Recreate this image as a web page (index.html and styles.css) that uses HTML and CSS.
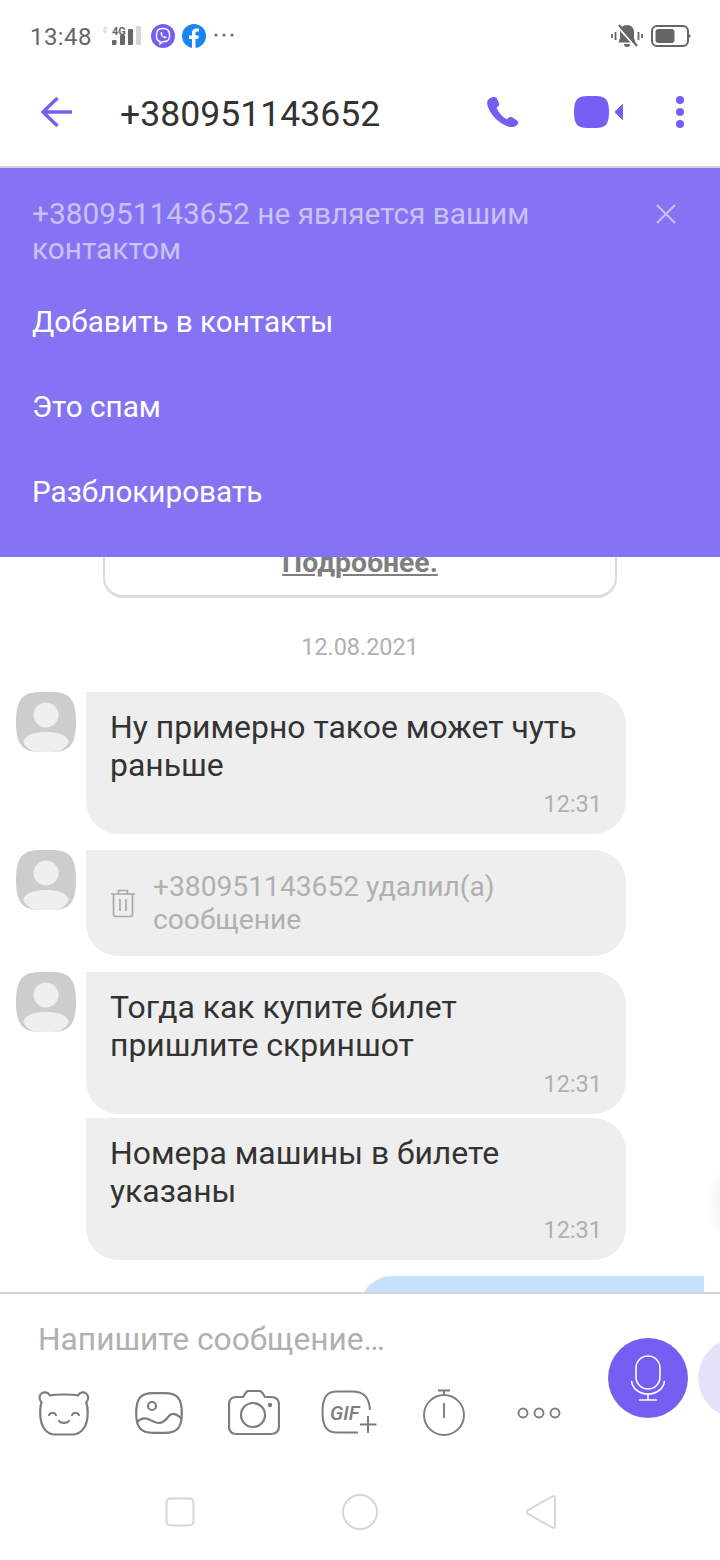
FILE: index.html
```html
<!DOCTYPE html>
<html lang="ru">
<head>
<meta charset="utf-8">
<title>Чат</title>
<link rel="stylesheet" href="styles.css">
</head>
<body>
<div class="phone">
  <div class="status">
    <div class="status-left">
      <span class="clock">13:48</span>
      <svg class="net" width="44" height="28" viewBox="0 0 44 28">
        <path d="M1.500 7.500L4 4l2.500 3.500zM1.500 8.500L4 12l2.500-3.500z" fill="#ddd"/>
        <text x="11" y="12.500" class="net-label">4G</text>
        <rect x="11" y="18" width="4.500" height="5" rx="1" fill="#666"/>
        <rect x="19" y="13" width="5" height="10" rx="1" fill="#666"/>
        <rect x="27" y="7" width="5" height="16" rx="1" fill="#666"/>
        <rect x="35" y="4" width="5" height="19" rx="1" fill="#d6d6d6"/>
      </svg>
      <svg width="24" height="24" viewBox="0 0 24 24" class="app-viber">
        <circle cx="12" cy="12" r="12" fill="#7360f2"/>
        <path d="M12 4.500c-4 0-6.500 1.500-6.500 6v2c0 3 1.500 4.500 3.500 5v2.500l2.500-2.200c4.500 0 7-1.300 7-5.300v-2c0-4.500-2.500-6-6.500-6z" fill="none" stroke="#fff" stroke-width="1.400"/>
        <path d="M9.500 8.500l1.200-.5 1 2-.8.800c.4 1 1 1.600 2 2l.8-.8 2 1-.6 1.300c-3 .3-6-3-5.600-5.800z" fill="#fff"/>
      </svg>
      <svg width="24" height="24" viewBox="0 0 24 24" class="app-fb">
        <circle cx="12" cy="12" r="12" fill="#1a85ee"/>
        <path d="M10 24v-9H7v-3.500h3V9c0-3 1.800-4.600 4.400-4.600 1.300 0 2.600.2 2.600.2v3h-1.500c-1.500 0-2 .9-2 1.800v2.100h3.300l-.5 3.500h-2.800v9z" fill="#fff"/>
      </svg>
      <svg width="20" height="4" viewBox="0 0 20 4" class="app-more">
        <circle cx="2" cy="2" r="1.500" fill="#666"/><circle cx="10" cy="2" r="1.500" fill="#666"/><circle cx="18" cy="2" r="1.500" fill="#666"/>
      </svg>
    </div>
    <div class="status-right">
      <svg width="32" height="24" viewBox="0 0 32 24">
        <path d="M16 1c-4.500 0-7 3-7 7v6l-1.500 4.500h17L23 14V8c0-4-2.500-7-7-7z" fill="#666"/>
        <path d="M13 20h6a3 3 0 0 1-6 0z" fill="#666"/>
        <path d="M7 3l18 20" stroke="#fff" stroke-width="2"/>
        <path d="M8 1l18 21" stroke="#666" stroke-width="2.200"/>
        <path d="M1 10v4M4.500 8v8M27.500 8v8M31 10v4" stroke="#666" stroke-width="1.800"/>
      </svg>
      <svg width="40" height="22" viewBox="0 0 40 22">
        <rect x="1" y="1" width="36" height="20" rx="5" fill="none" stroke="#666" stroke-width="2"/>
        <rect x="4.500" y="4" width="19" height="14" rx="3" fill="#666"/>
        <path d="M38 9l2 2-2 2z" fill="#666"/>
      </svg>
    </div>
  </div>

  <header class="topbar">
    <svg class="back" width="34" height="32" viewBox="0 0 34 32">
      <path d="M32 16H4M17.500 2L3 16l14.500 14" fill="none" stroke="#7360f2" stroke-width="3.400"/>
    </svg>
    <h1 class="title">+380951143652</h1>
    <svg class="call" width="34" height="32" viewBox="0 0 34 32">
      <path d="M3.500 2.500C1.500 4 .5 6 1.500 9.500 4 18 12 27 22 30.500c3.500 1.200 7 .5 9-1.500 2-2 1.500-3.500 0-4.500l-4.500-3c-1.500-1-2.800-.8-4 .2l-1.800 1.600C16 20.500 12.500 16.500 10.500 12l1.800-1.800c1-1 1.200-2 .6-3.400L11 2.800C10 .5 6.500.3 3.500 2.500z" fill="#7360f2"/>
    </svg>
    <svg class="video" width="49" height="32" viewBox="0 0 49 32">
      <path d="M13 0h9c9 0 13 3 13 16s-4 16-13 16h-9C4 32 0 29 0 16S4 0 13 0z" fill="#7360f2"/>
      <path d="M49 8v16l-8-8z" fill="#7360f2" stroke="#7360f2" stroke-linejoin="round"/>
    </svg>
    <svg class="kebab" width="10" height="32" viewBox="0 0 10 32">
      <circle cx="5" cy="4" r="4" fill="#7360f2"/><circle cx="5" cy="16" r="4" fill="#7360f2"/><circle cx="5" cy="28" r="4" fill="#7360f2"/>
    </svg>
  </header>

  <section class="banner">
    <div class="banner-head">
      <p class="banner-note">+380951143652 не является вашим контактом</p>
      <svg class="banner-close" width="22" height="22" viewBox="0 0 22 22">
        <path d="M2 2l18 18M20 2L2 20" stroke="#c9c1f8" stroke-width="2"/>
      </svg>
    </div>
    <a class="banner-link">Добавить в контакты</a>
    <a class="banner-link">Это спам</a>
    <a class="banner-link">Разблокировать</a>
  </section>

  <main class="chat">
    <div class="notice"><span class="notice-link">Подробнее.</span></div>
    <div class="date">12.08.2021</div>

    <div class="row">
      <svg class="avatar" viewBox="0 0 60 60"><use href="#person"/></svg>
      <div class="bubble">
        <p class="msg">Ну примерно такое может чуть раньше</p>
        <span class="time">12:31</span>
      </div>
    </div>

    <div class="row">
      <svg class="avatar" viewBox="0 0 60 60"><use href="#person"/></svg>
      <div class="bubble bubble-deleted">
        <svg class="trash" width="26" height="30" viewBox="0 0 26 30">
          <path d="M1 6h24M8.500 6V2.500h9V6M3.500 6v20c0 1.500 1 2.500 2.500 2.500h14c1.500 0 2.500-1 2.500-2.500V6M10 11v12M16 11v12" fill="none" stroke="#aaa" stroke-width="1.700"/>
        </svg>
        <p class="msg-deleted">+380951143652 удалил(а) сообщение</p>
      </div>
    </div>

    <div class="row">
      <svg class="avatar" viewBox="0 0 60 60"><use href="#person"/></svg>
      <div class="bubble">
        <p class="msg">Тогда как купите билет пришлите скриншот</p>
        <span class="time">12:31</span>
      </div>
    </div>

    <div class="row row-tight">
      <div class="avatar-gap"></div>
      <div class="bubble">
        <p class="msg">Номера машины в билете указаны</p>
        <span class="time">12:31</span>
      </div>
    </div>

    <div class="outgoing"></div>
    <div class="edge-hint"></div>
  </main>

  <footer class="composer">
    <div class="composer-body">
      <div class="composer-main">
        <div class="placeholder">Напишите сообщение…</div>
        <div class="tools">
          <svg class="tool" width="52" height="46" viewBox="0 0 52 46">
            <g fill="none" stroke="#7d7d7d" stroke-width="2.200" stroke-linecap="round">
              <path d="M12 5.500C10 2 6 1.500 3.500 3.500 1 5.500 .8 9.500 3.500 12.500 2.500 15 2.200 18 2.200 23c0 15 7 21.500 15 21.500h17c8 0 15.500-6.500 15.500-21.500 0-5-.5-8-1.500-10.500 2.700-3 2.500-7 0-9C45.700 1.500 42 2 40 5.500c-3-.8-6-1-14-1s-11 .2-14 1z"/>
              <path d="M11 25c1.500-3 5.500-3 7 0M34 25c1.500-3 5.500-3 7 0M21 31c2.500 2.500 7.500 2.500 10 0"/>
            </g>
          </svg>
          <svg class="tool" width="48" height="42" viewBox="0 0 48 42">
            <g fill="none" stroke="#7d7d7d" stroke-width="2.200">
              <path d="M18 1.200h12c12 0 16.800 5 16.800 19.800S42 40.800 30 40.800H18C6 40.800 1.200 36 1.200 21S6 1.200 18 1.200z"/>
              <circle cx="17" cy="14" r="4"/>
              <path d="M2 30c3-3 7-4.500 11-3 4 1.500 7 4 11 4s7-3 10-7c3-4 8-2 13 3"/>
            </g>
          </svg>
          <svg class="tool" width="52" height="46" viewBox="0 0 52 46">
            <g fill="none" stroke="#7d7d7d" stroke-width="2.200">
              <path d="M8 7h7l3-4.500c.8-1 1.500-1.500 3-1.500h10c1.500 0 2.200.5 3 1.500l3 4.500h6c5 0 8 3 8 8v21c0 5-3 8-8 8H8c-5 0-7-3-7-8V15c0-5 2-8 7-8z"/>
              <circle cx="25" cy="25" r="12"/>
            </g>
            <circle cx="42" cy="15" r="2.200" fill="#7d7d7d"/>
          </svg>
          <div class="gif">
            <svg class="gif-frame" width="56" height="46" viewBox="0 0 56 46">
              <g fill="none" stroke="#7d7d7d" stroke-width="2">
                <path d="M49 20C48 6 42 1.500 31 1.500H16C6 1.500 1.500 7 1.500 22S6 42.500 16 42.500h21"/>
                <path d="M47 26v17M39 34.500h16.500"/>
              </g>
            </svg>
            <span class="gif-label">GIF</span>
          </div>
          <svg class="tool tool-timer" width="44" height="47" viewBox="0 0 44 47">
            <g fill="none" stroke="#7d7d7d" stroke-width="1.900">
              <circle cx="22" cy="26" r="20"/>
              <path d="M22 6V1.500M16 1.500h12M22 14v15"/>
            </g>
          </svg>
          <svg class="tool tool-more" width="44" height="12" viewBox="0 0 44 12">
            <g fill="none" stroke="#7d7d7d" stroke-width="1.900">
              <circle cx="6" cy="6" r="4.500"/><circle cx="22" cy="6" r="4.500"/><circle cx="38" cy="6" r="4.500"/>
            </g>
          </svg>
        </div>
      </div>
      <div class="mic">
        <svg width="36" height="46" viewBox="0 0 36 46">
          <g fill="none" stroke="#fff" stroke-width="1.600">
            <rect x="6" y="1" width="24" height="33" rx="12"/>
            <path d="M1.500 26c1 8 8 13 16.500 13s15.500-5 16.500-13M18 39v6M9 45h18"/>
          </g>
        </svg>
      </div>
      <div class="mic-next"></div>
    </div>
  </footer>

  <nav class="navbar">
    <svg width="30" height="30" viewBox="0 0 30 30"><rect x="1.500" y="1.500" width="27" height="27" rx="4" fill="none" stroke="#d6d6d6" stroke-width="2"/></svg>
    <svg width="36" height="36" viewBox="0 0 36 36"><circle cx="18" cy="18" r="17" fill="none" stroke="#d6d6d6" stroke-width="2"/></svg>
    <svg width="32" height="36" viewBox="0 0 32 36"><path d="M27 2.500c1.500-1 3-.3 3 1.500v28c0 1.800-1.500 2.500-3 1.500L3 19.800c-1.500-1-1.500-2.600 0-3.600z" fill="none" stroke="#d6d6d6" stroke-width="2"/></svg>
  </nav>
</div>

<svg class="defs" width="0" height="0">
  <defs>
    <g id="person">
      <path d="M24 0h12c18 0 24 8 24 30S54 60 36 60H24C6 60 0 52 0 30S6 0 24 0z" fill="#cdcdcd"/>
      <circle cx="30" cy="23" r="12.500" fill="#efefef"/>
      <path d="M7 50c3-8 12-10 23-10s20 2 23 10c-4 7-10 10-17 10H24c-7 0-13-3-17-10z" fill="#efefef"/>
    </g>
  </defs>
</svg>
</body>
</html>
```

FILE: styles.css
```css
* { box-sizing: border-box; }
html, body { margin: 0; padding: 0; }
body { background: #fff; font-family: Roboto, "Noto Sans", sans-serif; overflow: hidden; }
p, h1 { margin: 0; font-weight: 400; }
.defs { display: block; }

.phone { width: 720px; height: 1560px; display: flex; flex-direction: column; overflow: hidden; }

.status { height: 72px; flex: none; display: flex; justify-content: space-between; align-items: center; padding: 0 29px 0 30px; }
.status-left, .status-right { display: flex; align-items: center; }
.clock { font-size: 24px; color: #666; font-weight: 400; letter-spacing: .4px; padding-top: 1px; }
.net { margin-left: 9px; }
.net-label { font-family: Roboto, sans-serif; font-size: 11px; font-weight: 700; fill: #666; }
.app-viber { margin-left: 6px; }
.app-fb { margin-left: 7px; }
.app-more { margin-left: 8px; margin-bottom: 2px; }
.status-right { gap: 8px; }

.topbar { height: 96px; flex: none; display: flex; align-items: center; padding: 0 35px 10px 40px; border-bottom: 2px solid #d3d3d3; }
.topbar svg { margin-bottom: 4px; }
.back { flex: none; }
.title { flex: 1; font-size: 35.600px; color: #333; margin-left: 46px; }
.call { flex: none; }
.video { flex: none; margin-left: 54px; }
.kebab { flex: none; margin-left: 52px; }

.banner { height: 389px; flex: none; background: #8474f3; padding: 28px 32px 0; position: relative; z-index: 1; display: flex; flex-direction: column; }
.banner-head { display: flex; justify-content: space-between; align-items: flex-start; height: 106px; }
.banner-note { font-size: 29.800px; line-height: 35px; color: #c9c1f8; width: 560px; }
.banner-close { margin: 7px 11px 0 0; flex: none; }
.banner-link { font-size: 29.700px; height: 85px; line-height: 34px; color: #fff; padding-top: 3px; }

.chat { height: 735px; flex: none; overflow: hidden; display: flex; flex-direction: column; position: relative; }
.notice { width: 514px; height: 60px; margin: -19px 0 0 103px; border: 2px solid #dcdcdc; border-top: 0; border-bottom-width: 3px; border-radius: 0 0 20px 20px; text-align: center; flex: none; padding-top: 8px; }
.notice-link { font-size: 28.400px; font-weight: 700; color: #7f7f7f; text-decoration: underline; line-height: 34px; }
.date { flex: none; margin-top: 34px; height: 30px; line-height: 30px; font-size: 23.400px; color: #b0b0b0; text-align: center; }

.row { display: flex; flex: none; padding-left: 16px; margin-top: 16px; }
.date + .row { margin-top: 30px; }
.row-tight { margin-top: 4px; }
.avatar, .avatar-gap { width: 60px; height: 60px; flex: none; }
.bubble { width: 540px; margin-left: 10px; background: #eee; border-radius: 32px; border-top-left-radius: 0; padding: 16px 24px 15px 24px; display: flex; flex-direction: column; }
.msg { font-size: 31.900px; line-height: 38px; color: #333; }
.time { align-self: flex-end; font-size: 23.500px; line-height: 30px; color: #b0b0b0; margin-top: 5px; }
.bubble-deleted { flex-direction: row; align-items: center; padding: 20px 24px 20px 24px; }
.trash { flex: none; }
.msg-deleted { font-size: 28.200px; line-height: 33px; color: #b0b0b0; margin-left: 17px; }

.outgoing { flex: none; width: 344px; height: 100px; margin: 16px 0 0 360px; background: #c5e1fb; border-radius: 32px 0 0 0; }
.edge-hint { position: absolute; right: -24px; top: 615px; width: 32px; height: 64px; border-radius: 50%; background: #f6f6f6; filter: blur(5px); }

.composer { flex: none; height: 178px; border-top: 2px solid #d3d3d3; }
.composer-body { display: flex; align-items: flex-start; }
.composer-main { width: 608px; flex: none; padding-left: 38px; }
.placeholder { font-size: 31.700px; line-height: 36px; color: #b0b0b0; margin-top: 28px; }
.tools { display: flex; align-items: center; margin-top: 31px; gap: 45px; }
.gif { position: relative; width: 56px; height: 46px; flex: none; margin-left: -4px; }
.gif-frame { display: block; }
.gif-label { position: absolute; left: 9px; top: 11px; font-size: 20px; line-height: 24px; font-weight: 500; font-style: italic; color: #7d7d7d; }
.tool-more { margin-left: 6px; }
.mic { width: 80px; height: 80px; border-radius: 50%; background: #7360f2; flex: none; margin-top: 44px; display: flex; align-items: center; justify-content: center; }
.mic-next { width: 80px; height: 80px; border-radius: 50%; background: #e6e1fa; flex: none; margin: 44px 0 0 10px; }

.navbar { flex: 1; display: flex; align-items: center; justify-content: center; gap: 147px; padding: 0 0 6px 1px; }
```
